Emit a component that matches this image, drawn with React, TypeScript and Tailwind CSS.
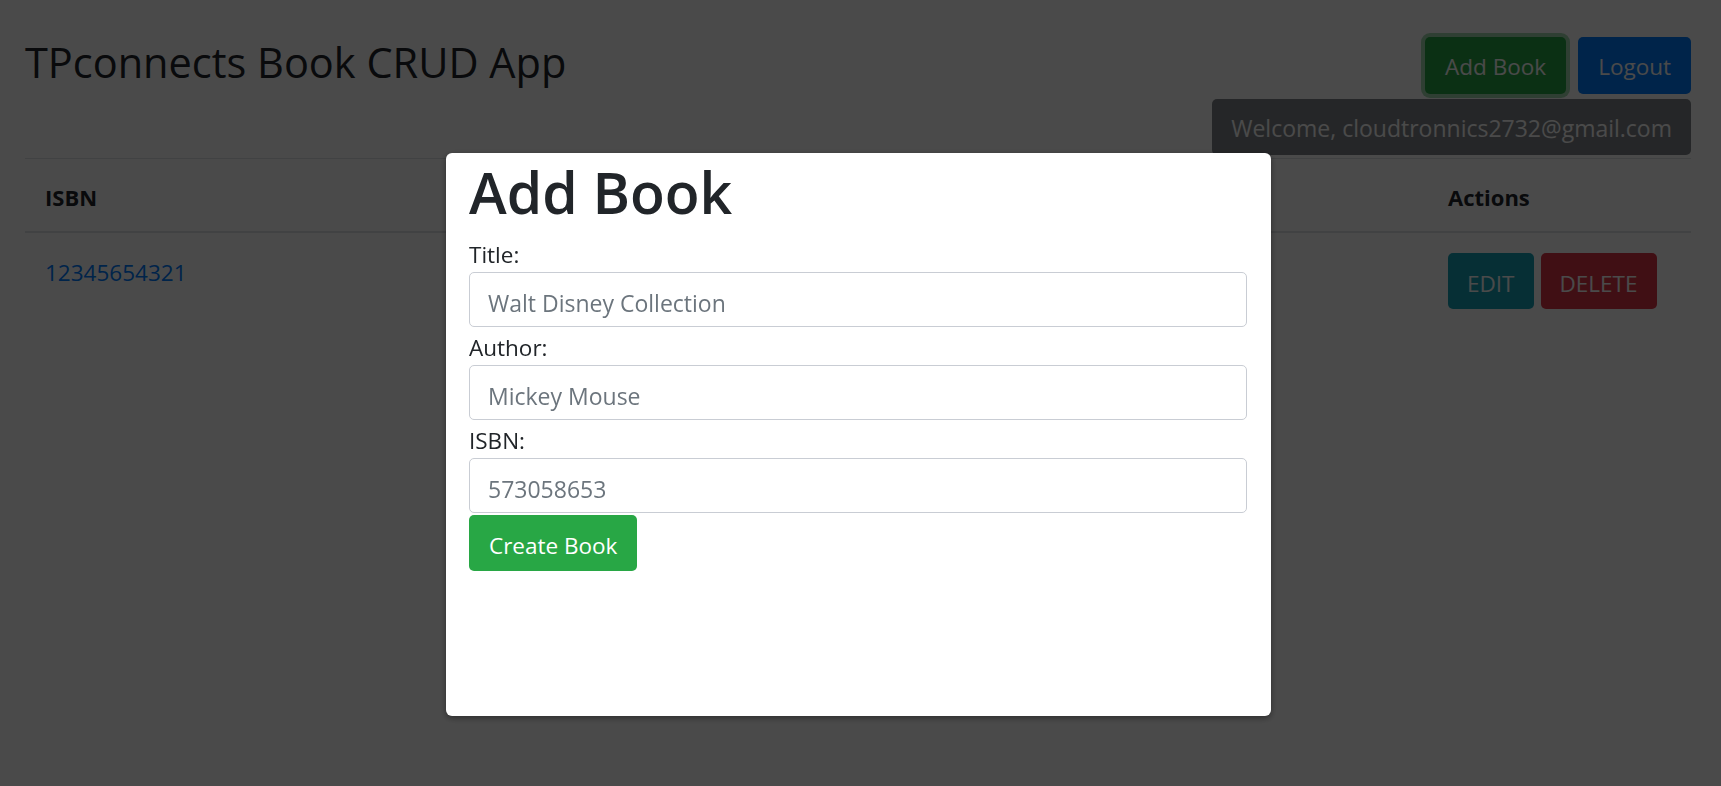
import React from 'react';

interface Book {
  isbn: string;
}

const books: Book[] = [{ isbn: '12345654321' }];

function AddBookModal() {
  const fields = [
    { label: 'Title:', placeholder: 'Walt Disney Collection' },
    { label: 'Author:', placeholder: 'Mickey Mouse' },
    { label: 'ISBN:', placeholder: '573058653' },
  ];

  return (
    <div className="fixed inset-0 bg-black/[0.71]">
      <div className="absolute left-[446px] top-[153px] h-[563px] w-[825px] rounded-[6px] bg-white pl-[23px] pr-[24px] pt-[3px] shadow-[0_2px_6px_rgba(0,0,0,0.4)]">
        <h2 className="mb-[10px] text-[57px] leading-[72px] font-semibold text-[#212529]">Add Book</h2>
        <form className="flex flex-col" onSubmit={(e) => e.preventDefault()}>
          {fields.map((f, i) => (
            <div key={f.label} className={i > 0 ? 'mt-[4px]' : ''}>
              <label className="block text-[22.5px] leading-[34px] text-[#212529]">{f.label}</label>
              <input
                className="block h-[55px] w-full rounded-[5px] border border-[#c9cdd4] bg-white px-[18px] pt-[6px] text-[23px] text-[#495057] outline-none placeholder:text-[#6c757d]"
                placeholder={f.placeholder}
                type="text"
              />
            </div>
          ))}
          <div className="mt-[2px]">
            <button
              type="submit"
              className="h-[56px] rounded-[5px] bg-[#28a745] px-[20px] pt-[6px] text-[22.5px] text-white"
            >
              Create Book
            </button>
          </div>
        </form>
      </div>
    </div>
  );
}

export default function App() {
  return (
    <div className="relative min-h-screen bg-white font-['Open_Sans',sans-serif] text-[#212529]">
      <div className="pl-[25px] pr-[30px] pt-[37px]">
        {/* Header */}
        <header className="flex items-start justify-between">
          <h1 className="text-[41.5px] leading-[50px] font-normal">TPconnects Book CRUD App</h1>
          <div className="flex flex-col items-end gap-[5px]">
            <div className="flex gap-[12px]">
              <button className="h-[57px] rounded-[5px] bg-[#28a745] px-[20px] pt-[2px] text-[22.5px] text-white shadow-[0_0_0_4px_rgba(72,180,97,0.5)]">
                Add Book
              </button>
              <button className="h-[57px] rounded-[5px] bg-[#007bff] px-[20px] pt-[2px] text-[22.5px] text-white">
                Logout
              </button>
            </div>
            <div className="flex h-[56px] items-center rounded-[5px] bg-[#80858a] px-[19px] pt-[2px] text-[23px] text-white">
              Welcome, cloudtronnics2732@gmail.com
            </div>
          </div>
        </header>

        {/* Books table; the Title and Author columns sit under the modal */}
        <table className="mt-[3px] w-full table-fixed">
          <thead>
            <tr className="text-left text-[22px] leading-[33px] font-bold">
              <th className="w-[420px] border-t border-b-2 border-[#dee2e6] px-[20px] pt-[22px] pb-[17px] align-bottom">ISBN</th>
              <th className="border-t border-b-2 border-[#dee2e6] px-[20px] pt-[22px] pb-[17px] align-bottom"></th>
              <th className="w-[263px] border-t border-b-2 border-[#dee2e6] px-[20px] pt-[22px] pb-[17px] align-bottom">Actions</th>
            </tr>
          </thead>
          <tbody>
            {books.map((b) => (
              <tr key={b.isbn} className="text-[22.5px] leading-[33px]">
                <td className="px-[20px] pt-[23px] align-top">
                  <a href="#" className="text-[#007bff]">{b.isbn}</a>
                </td>
                <td></td>
                <td className="px-[20px] pt-[20px] align-top">
                  <div className="flex gap-[7px]">
                    <button className="h-[56px] rounded-[5px] bg-[#17a2b8] px-[19px] pt-[4px] text-white">EDIT</button>
                    <button className="h-[56px] rounded-[5px] bg-[#dc3545] px-[19px] pt-[4px] text-white">DELETE</button>
                  </div>
                </td>
              </tr>
            ))}
          </tbody>
        </table>
      </div>

      <AddBookModal />
    </div>
  );
}
